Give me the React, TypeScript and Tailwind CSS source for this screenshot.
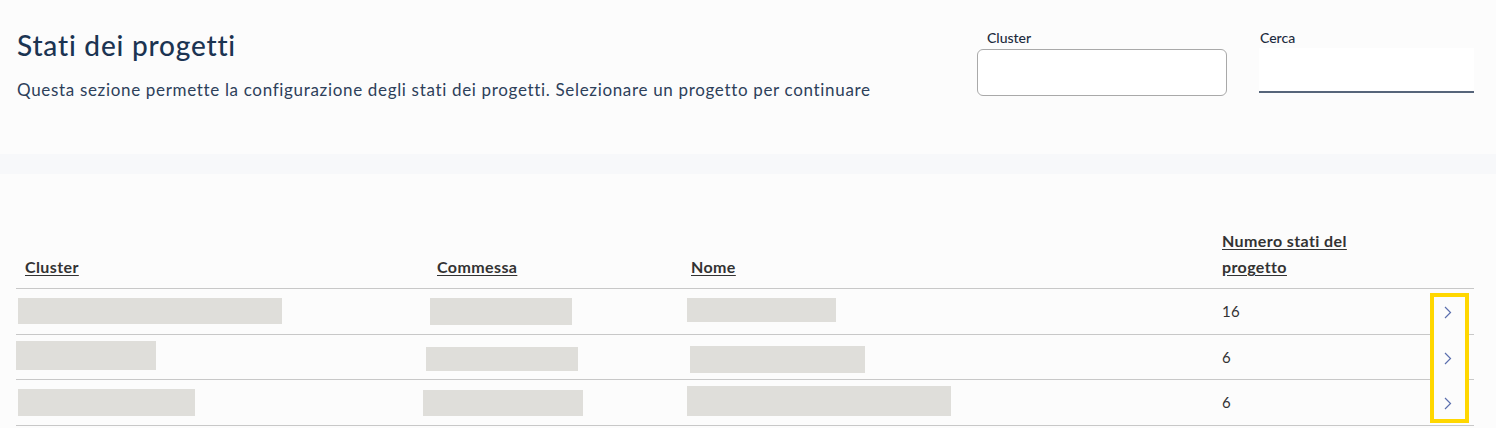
import React from 'react';

type Block = { cls: string };

type Row = {
  h: string;
  cluster: string;
  commessa: string;
  nome: string;
  stati: number;
};

// placeholder bars standing in for the redacted cell values
const rows: Row[] = [
  {
    h: 'h-[46px]',
    cluster: 'ml-[2px] mt-[9px] w-[264px] h-[26px]',
    commessa: 'ml-[2px] mt-[9px] w-[142px] h-[27px]',
    nome: 'ml-[5px] mt-[9px] w-[149px] h-[24px]',
    stati: 16,
  },
  {
    h: 'h-[45px]',
    cluster: 'ml-0 mt-[6px] w-[140px] h-[29px]',
    commessa: '-ml-[2px] mt-[12px] w-[152px] h-[24px]',
    nome: 'ml-[8px] mt-[11px] w-[175px] h-[27px]',
    stati: 6,
  },
  {
    h: 'h-[46px]',
    cluster: 'ml-[2px] mt-[9px] w-[177px] h-[27px]',
    commessa: '-ml-[5px] mt-[10px] w-[160px] h-[26px]',
    nome: 'ml-[5px] mt-[6px] w-[264px] h-[30px]',
    stati: 6,
  },
];

function Redacted({ cls }: Block) {
  return <div className={`bg-[#dfdeda] ${cls}`} />;
}

function Chevron() {
  return (
    <svg width="8" height="13" viewBox="0 0 8 13" fill="none">
      <path d="M1 1 L6.5 6.5 L1 12" stroke="#5b6fae" strokeWidth="1.2" />
    </svg>
  );
}

export default function App() {
  return (
    <div className="min-h-screen w-[1496px] bg-[#fcfcfc] font-['Lato',sans-serif] text-[#333]">
      {/* intestazione */}
      <div className="flex justify-between pl-[17px] pr-[22px] pt-[27px] h-[154px]">
        <div>
          <h1 className="text-[28px] leading-[36px] font-medium tracking-[0.8px] text-[#1b3452]">Stati dei progetti</h1>
          <p className="mt-[15px] text-[17px] leading-[24px] tracking-[0.67px] text-[#2d405a]">
            Questa sezione permette la configurazione degli stati dei progetti. Selezionare un progetto per continuare
          </p>
        </div>
        <div className="flex gap-[32px] pt-[1px]">
          <div className="w-[250px]">
            <label className="block pl-[10px] text-[14px] leading-[20px] font-medium text-[#1c2b3e]">Cluster</label>
            <input className="mt-[1px] w-full h-[47px] bg-white border border-[#a9a9a9] rounded-[6px]" />
          </div>
          <div className="w-[215px]">
            <label className="block pl-[1px] text-[14px] leading-[20px] font-medium text-[#1c2b3e]">Cerca</label>
            <input className="w-full h-[45px] bg-white border-b-2 border-[#56657a] outline-none" />
          </div>
        </div>
      </div>

      <div className="h-[20px] bg-[#f7f8fa]" />

      {/* tabella */}
      <div className="relative ml-[16px] mt-[54px] w-[1458px]">
        <table className="w-full border-collapse table-fixed">
          <colgroup>
            <col className="w-[412px]" />
            <col className="w-[254px]" />
            <col className="w-[531px]" />
            <col className="w-[217px]" />
            <col className="w-[44px]" />
          </colgroup>
          <thead>
            <tr className="border-b border-[#c8c8c8]">
              {['Cluster', 'Commessa', 'Nome', 'Numero stati del progetto', ''].map((h, i) => (
                <th
                  key={i}
                  className={`align-bottom text-left pb-[8px] pl-[9px] text-[16px] leading-[26px] font-bold tracking-[0.4px] text-[#333] ${
                    i === 3 ? 'pr-[60px]' : ''
                  }`}
                >
                  <span className="underline underline-offset-[2px]">{h}</span>
                </th>
              ))}
            </tr>
          </thead>
          <tbody>
            {rows.map((r, i) => (
              <tr key={i} className={`border-b border-[#c8c8c8] ${r.h}`}>
                <td className="p-0 align-top">
                  <Redacted cls={r.cluster} />
                </td>
                <td className="p-0 align-top">
                  <Redacted cls={r.commessa} />
                </td>
                <td className="p-0 align-top">
                  <Redacted cls={r.nome} />
                </td>
                <td className="p-0 pl-[9px] align-middle text-[15px] tracking-[0.3px] text-[#333]">{r.stati}</td>
                <td className="p-0 align-middle">
                  <div className="relative z-10 pl-[14px] pt-[2px] flex">
                    <Chevron />
                  </div>
                </td>
              </tr>
            ))}
          </tbody>
        </table>
        {/* riquadro evidenziato */}
        <div className="absolute left-[1414px] top-[65px] w-[39px] h-[130px] border-[4px] border-[#ffd700] bg-[#fcfcfc]" />
      </div>
    </div>
  );
}
